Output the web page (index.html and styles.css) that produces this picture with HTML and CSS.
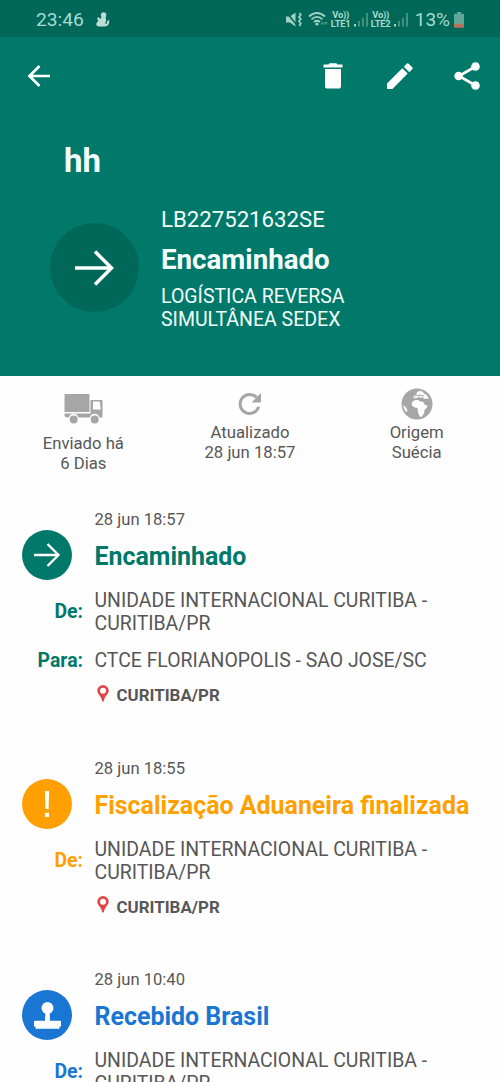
FILE: index.html
```html
<!DOCTYPE html>
<html lang="pt-BR">
<head>
<meta charset="utf-8">
<title>Rastreamento</title>
<link rel="stylesheet" href="styles.css">
</head>
<body>
<div class="statusbar">
  <span class="clock">23:46</span>
  <svg class="notif" width="14" height="16" viewBox="0 0 14 16"><circle cx="7.600" cy="3" r="2.700"/><path d="M5.600 5h4l.6 3.500-1 3.300c1.300.3 2-.6 2-2.800l2-1c.4 4-1.500 6.500-4.200 6.500H3C.5 14.500-.3 12.500.7 10.800L2.200 9 1 6l1.800-.8L4.400 7z"/></svg>
  <div class="indicators">
    <svg class="mute" width="17" height="17" viewBox="0 0 17 17"><path class="fill" d="M0 5.500h4L9.500 1.500v14L4 11.500H0z"/><path class="cut" d="M0 .8l11 13.500"/><path class="stroke" d="M13.500 2l1.300 1.700-1.800 2.200 1.800 2.200-1.800 2.200 1.800 2.200-1.300 2.500"/></svg>
    <svg class="wifi" width="21" height="17" viewBox="0 0 21 17"><path class="stroke" d="M1 5.500Q9 -1.500 17 5.500M3.500 8.300Q9 3.600 14.500 8.300M6 11Q9 8.500 12 11"/><circle class="fill" cx="9" cy="13" r="1.600"/><path class="dim" d="M14.500 10.500l2.300 3h-4.500zM18 14l-2.200-3h4.400z"/></svg>
    <span class="volte"><b>Vo))</b><b>LTE1</b></span>
    <svg class="signal" width="15" height="15" viewBox="0 0 15 15"><path class="fill" d="M0 12h2v2.500H0z"/><path class="dim" d="M4 9h2v5.500H4zM8 6h2v8.500H8zM12 1h2v13.500h-2z"/></svg>
    <span class="volte"><b>Vo))</b><b>LTE2</b></span>
    <svg class="signal" width="15" height="15" viewBox="0 0 15 15"><path class="fill" d="M0 12h2v2.500H0z"/><path class="dim" d="M4 9h2v5.500H4zM8 6h2v8.500H8zM12 1h2v13.500h-2z"/></svg>
    <span class="percent">13%</span>
    <svg class="battery" width="10" height="16" viewBox="0 0 10 16"><path d="M3 0h4v1.800h2.200q.8 0 .8.800V12H0V2.600q0-.8.800-.8H3z" fill="#62a698"/><path d="M0 11.800h10V15q0 .8-.8.800H.8Q0 15.800 0 15z" fill="#b9705c"/></svg>
  </div>
</div>

<header class="header">
  <nav class="toolbar">
    <svg class="back" width="24" height="24" viewBox="0 0 24 24"><path d="M23 12H3M12.500 2L2.500 12l10 10"/></svg>
    <div class="actions">
      <svg width="20" height="26" viewBox="0 0 20 26"><path d="M.5 1.500h5L6.700.2h6.600l1.200 1.300h5v3H.5zM2 6h16v17q0 2.600-2.600 2.600H4.600Q2 25.600 2 23z"/></svg>
      <svg width="26" height="26" viewBox="0 0 26 26"><path d="M0 20.500L15.300 5.200l5.400 5.400L5.400 26H0zM16.800 3.700l2.900-2.900q1-1 2 0l3.500 3.500q1 1 0 2l-2.900 2.900z"/></svg>
      <svg width="27" height="28" viewBox="0 0 27 28"><path d="M21.500 4.500L5 14l16.500 9.500" fill="none" stroke="#fff" stroke-width="2.600"/><circle cx="21.500" cy="4.500" r="4.300"/><circle cx="4.600" cy="14" r="4.300"/><circle cx="21.500" cy="23.500" r="4.300"/></svg>
    </div>
  </nav>
  <h1 class="name">hh</h1>
  <div class="summary">
    <div class="bigdot"><svg width="40" height="36" viewBox="0 0 40 36"><path d="M0 18h37M20 1.500L36.500 18 20 34.500"/></svg></div>
    <div class="info">
      <div class="code">LB227521632SE</div>
      <div class="state">Encaminhado</div>
      <div class="service">LOGÍSTICA REVERSA<br>SIMULTÂNEA SEDEX</div>
    </div>
  </div>
</header>

<section class="facts">
  <div class="fact">
    <svg class="truck" width="40" height="32" viewBox="0 0 40 32"><path d="M.5 1h25v18H.5z"/><path d="M.5 20.500h26V7H38.500v17.500h-3a5 5 0 0 0-9.700 0H14.500a5 5 0 0 0-9.700 0H3.500q-2 0-3-1.500z"/><path d="M29 8.500h6.800l.8 8H29z" fill="#fff"/><circle cx="9.700" cy="26.500" r="4"/><circle cx="30.700" cy="26.500" r="4"/></svg>
    <span>Enviado há<br>6 Dias</span>
  </div>
  <div class="fact">
    <svg class="reload" width="24" height="24" viewBox="0 0 24 24"><path d="M20.700 14.800A9.500 9.500 0 1 1 18.600 5.500" fill="none" stroke="#a6a6a6" stroke-width="3"/><path d="M23 1v9.500h-9.500z"/></svg>
    <span>Atualizado<br>28 jun 18:57</span>
  </div>
  <div class="fact">
    <svg class="globe" width="32" height="32" viewBox="0 0 32 32"><circle cx="16" cy="16" r="15.500"/><path d="M11.500 13.500l3-1.500 3.500.3 1 1.200 3 .2 2 3.300 2.500.5-.5 2-2.500 2.500-.5 3.500-2.500 3.500-1.800-.5-1.700-4-.5-4.500-3.500-.8-2.500-2.500zM12 10l1.500-2.500 2-1 .5-2.500 3-2 4 1.500-1 1.500 2 1 2.500 2 1.500 3-3-.5-2 .5-1.500-2-1.500 1-2-1.500-2 1.800zM2 17l3 2.500 1.500 2.500-1 2.500Q2.500 21.500 2 17z" fill="#fff"/><path d="M13 4.500Q17 1 24 4M14 8.500l4-1.500 5 1" fill="none" stroke="#a6a6a6"/></svg>
    <span>Origem<br>Suécia</span>
  </div>
</section>

<main class="timeline">
  <article class="event green">
    <time class="date">28 jun 18:57</time>
    <div class="dot"><svg width="27" height="24" viewBox="0 0 27 24"><path d="M0 12h25M13.500 1L24.500 12l-11 11" fill="none" stroke="#fff" stroke-width="2.300"/></svg></div>
    <h2 class="title">Encaminhado</h2>
    <div class="label">De:</div>
    <p class="place">UNIDADE INTERNACIONAL CURITIBA -<br>CURITIBA/PR</p>
    <div class="label">Para:</div>
    <p class="place">CTCE FLORIANOPOLIS - SAO JOSE/SC</p>
    <div class="city"><svg width="12" height="17" viewBox="0 0 12 17"><path d="M6 0a5.700 5.700 0 0 1 5.700 5.700C11.700 9 7.500 11 6.700 16.500H5.300C4.500 11 .3 9 .3 5.700A5.700 5.700 0 0 1 6 0zm0 2.700a3 3 0 1 0 0 6 3 3 0 0 0 0-6z"/></svg>CURITIBA/PR</div>
  </article>

  <article class="event amber">
    <time class="date">28 jun 18:55</time>
    <div class="dot"><svg width="6" height="28" viewBox="0 0 6 28"><path d="M.9 1h4.200L4.600 19H1.400zM1 22.800h4V27H1z" fill="#fff"/></svg></div>
    <h2 class="title">Fiscalização Aduaneira finalizada</h2>
    <div class="label">De:</div>
    <p class="place">UNIDADE INTERNACIONAL CURITIBA -<br>CURITIBA/PR</p>
    <div class="city"><svg width="12" height="17" viewBox="0 0 12 17"><path d="M6 0a5.700 5.700 0 0 1 5.700 5.700C11.700 9 7.500 11 6.700 16.500H5.300C4.500 11 .3 9 .3 5.700A5.700 5.700 0 0 1 6 0zm0 2.700a3 3 0 1 0 0 6 3 3 0 0 0 0-6z"/></svg>CURITIBA/PR</div>
  </article>

  <article class="event blue">
    <time class="date">28 jun 10:40</time>
    <div class="dot"><svg width="27" height="27" viewBox="0 0 27 27"><g fill="#fff"><circle cx="13.500" cy="6" r="6"/><path d="M11.400 10.500h4.200l.4 8.300H26q1 0 1 1v4.700h-1.500v2.200H1.500v-2.200H0v-4.700q0-1 1-1h10z"/></g></svg></div>
    <h2 class="title">Recebido Brasil</h2>
    <div class="label">De:</div>
    <p class="place">UNIDADE INTERNACIONAL CURITIBA -<br>CURITIBA/PR</p>
  </article>
</main>
</body>
</html>
```
FILE: styles.css
```css
* { box-sizing: border-box; }
html { height: 1082px; overflow: hidden; }
body {
  margin: 0;
  width: 500px;
  height: 1082px;
  overflow: hidden;
  background: #fefefe;
  color: #575757;
  font-family: Roboto, "Liberation Sans", sans-serif;
}
h1, h2, p { margin: 0; }
svg { display: block; flex: none; }

.statusbar {
  display: flex;
  align-items: center;
  height: 37px;
  padding: 2px 36px 0;
  background: #006858;
  color: #a5dccf;
}
.clock { width: 60px; font-size: 19.2px; line-height: 22px; }
.notif { fill: #bcdcd4; }
.indicators { display: flex; align-items: center; margin-left: auto; }
.fill { fill: #a0d2c6; }
.dim { fill: #43917f; }
.stroke { fill: none; stroke: #a0d2c6; stroke-width: 1.7; }
.cut { fill: none; stroke: #006858; stroke-width: 1.6; }
.wifi { margin-left: 5px; }
.volte {
  display: flex;
  flex-direction: column;
  align-items: center;
  width: 20px;
  margin: 0 3px 0 2px;
  font-size: 9.4px;
  line-height: 8.5px;
  letter-spacing: -0.2px;
}
.percent { margin: 0 4px 0 6px; font-size: 19px; line-height: 22px; }

.header { height: 339px; background: #00796a; color: #f4fffc; }
.toolbar { display: flex; justify-content: space-between; align-items: center; height: 77px; padding: 0 19px 0 27px; }
.back { fill: none; stroke: #fff; stroke-width: 2.7; }
.actions { display: flex; align-items: center; fill: #fff; }
.actions svg + svg { margin-left: 44px; }
.actions svg:last-child { margin-left: 41px; }
.name { padding: 29px 64px 0; font-size: 33px; line-height: 36px; font-weight: 700; }
.summary { display: flex; gap: 22px; padding: 29px 0 0 50px; }
.bigdot {
  display: flex;
  align-items: center;
  justify-content: center;
  width: 89px;
  height: 89px;
  margin-top: 15px;
  border-radius: 50%;
  background: #006858;
}
.bigdot svg { fill: none; stroke: #fff; stroke-width: 3.5; }
.code { font-size: 22.2px; line-height: 23px; }
.state { margin-top: 13px; font-size: 27.7px; line-height: 32px; font-weight: 700; }
.service { margin-top: 9px; font-size: 19.5px; line-height: 23px; }

.facts {
  display: grid;
  grid-template-columns: repeat(3, 1fr);
  height: 134px;
  font-size: 16.7px;
  line-height: 19.5px;
  text-align: center;
}
.fact { display: flex; flex-direction: column; align-items: center; fill: #a6a6a6; }
.truck { margin: 17px 0 9px 2px; }
.reload { margin: 16px 0 7px; }
.globe { margin: 12px 0 3px; }

.event {
  display: grid;
  grid-template-columns: 83px 1fr;
  column-gap: 11.5px;
  align-items: center;
  margin-bottom: 53.5px;
}
.date { grid-column: 2; font-size: 16.6px; line-height: 20px; }
.dot {
  display: flex;
  align-items: center;
  justify-content: center;
  width: 50px;
  height: 50px;
  margin: 0 0 1px 22px;
  border-radius: 50%;
  background: var(--accent);
}
.title { margin-top: 3px; font-size: 24.95px; line-height: 28px; font-weight: 700; color: var(--accent); white-space: nowrap; }
.label { margin-top: 7px; text-align: right; font-size: 19.4px; line-height: 23px; font-weight: 700; color: var(--accent); }
.place { margin-top: 8px; font-size: 19.42px; line-height: 23px; white-space: nowrap; }
.place + .label, .place + .label + .place { margin-top: 14px; }
.city {
  grid-column: 2;
  display: flex;
  align-items: center;
  gap: 8px;
  margin-top: 13px;
  padding-left: 2px;
  font-size: 16.9px;
  line-height: 20px;
  font-weight: 700;
}
.city svg { fill: #e04646; margin-top: -4px; }
.green { --accent: #00796a; }
.amber { --accent: #ffa000; }
.blue { --accent: #1976d2; }
```
